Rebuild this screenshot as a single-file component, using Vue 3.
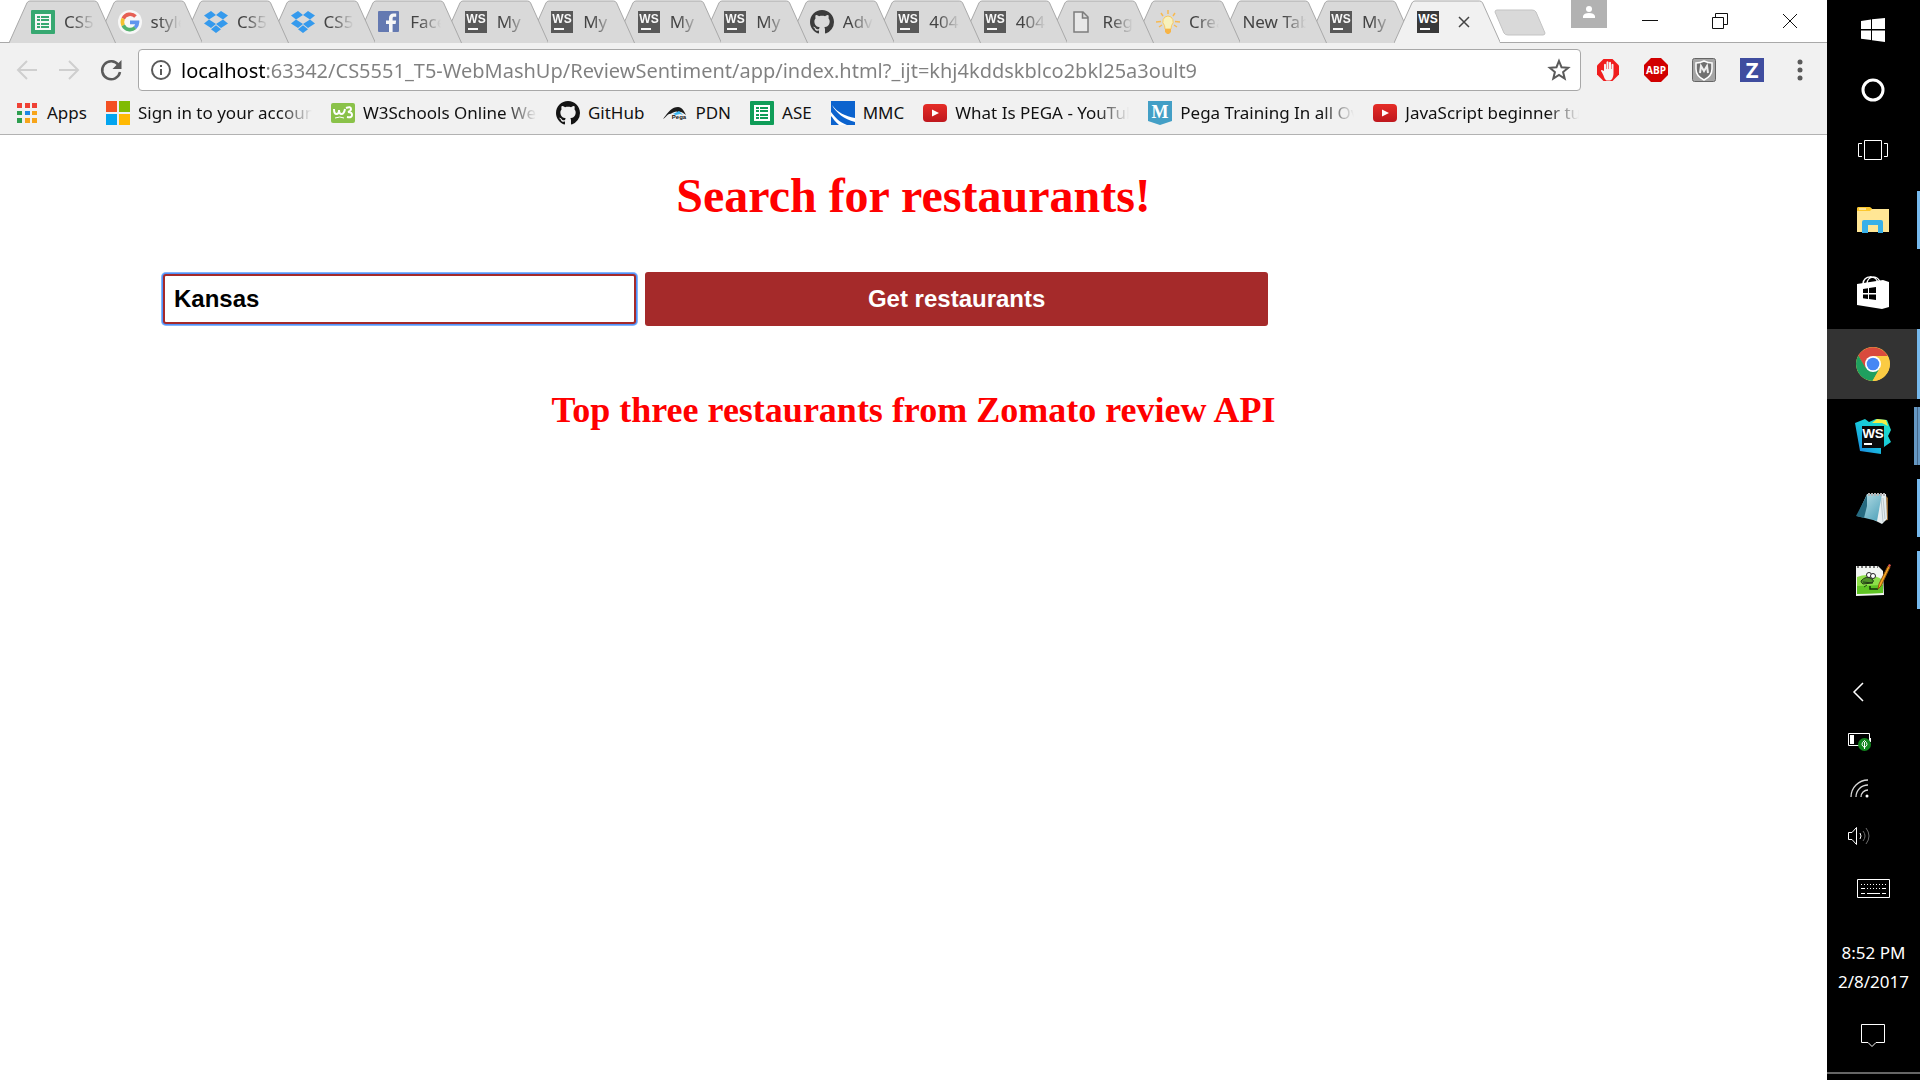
<script setup>
import { h, ref } from 'vue'

// Lettering that sits on top of some icons, in the icon's 24-unit grid.
const lettering = {
  ws: { text: 'WS', x: 12, y: 13, size: 12, family: 'Liberation Sans, sans-serif', fill: '#fff' },
  webstorm: { text: 'WS', x: 12, y: 13, size: 9, family: 'Liberation Sans, sans-serif', fill: '#fff' },
  pega: { text: 'Pega', x: 16, y: 18, size: 6, family: 'Liberation Sans, sans-serif', fill: '#111' },
  mshield: { text: 'M', x: 12, y: 17, size: 18, family: 'Liberation Serif, serif', fill: '#fff' },
  abp: { text: 'ABP', x: 12, y: 16, size: 10, family: 'Open Sans, sans-serif', fill: '#fff' },
  zotero: { text: 'Z', x: 12, y: 20, size: 22, family: 'Open Sans, sans-serif', fill: '#fff' }
}

function Icon(props) {
  const mark = lettering[props.name]
  return h('svg', { viewBox: '0 0 24 24', 'aria-hidden': 'true' }, [
    h('use', { href: '#' + props.name, width: 24, height: 24 }),
    mark
      ? h('text', {
          x: mark.x,
          y: mark.y,
          fill: mark.fill,
          'text-anchor': 'middle',
          'font-family': mark.family,
          'font-size': mark.size,
          'font-weight': 'bold'
        }, mark.text)
      : null
  ])
}
Icon.props = ['name']

const tabs = [
  { icon: 'sheets', label: 'CS5551' },
  { icon: 'google', label: 'style guide' },
  { icon: 'dropbox', label: 'CS5551' },
  { icon: 'dropbox', label: 'CS5551' },
  { icon: 'facebook', label: 'Facebook' },
  { icon: 'ws', label: 'My' },
  { icon: 'ws', label: 'My' },
  { icon: 'ws', label: 'My' },
  { icon: 'ws', label: 'My' },
  { icon: 'github', label: 'Advanced' },
  { icon: 'ws', label: '404 Not' },
  { icon: 'ws', label: '404 Not' },
  { icon: 'page', label: 'Registry' },
  { icon: 'bulb', label: 'Create' },
  { icon: '', label: 'New Tab' },
  { icon: 'ws', label: 'My' },
  { icon: 'ws', label: '', active: true }
]

const bookmarks = [
  { icon: 'apps', label: 'Apps' },
  { icon: 'microsoft', label: 'Sign in to your account', long: true },
  { icon: 'w3', label: 'W3Schools Online Web', long: true },
  { icon: 'github', label: 'GitHub' },
  { icon: 'pega', label: 'PDN' },
  { icon: 'sheets', label: 'ASE' },
  { icon: 'mmc', label: 'MMC' },
  { icon: 'youtube', label: 'What Is PEGA - YouTube', long: true },
  { icon: 'mshield', label: 'Pega Training In all Over', long: true },
  { icon: 'youtube', label: 'JavaScript beginner tutorial', long: true }
]

const extensions = [
  { icon: 'hand', label: 'AdBlock' },
  { icon: 'abp', label: 'Adblock Plus' },
  { icon: 'mcafee', label: 'McAfee' },
  { icon: 'zotero', label: 'Z' },
  { icon: 'dots', label: 'Menu' }
]

const system = [
  { icon: 'windows', label: 'Start' },
  { icon: 'cortana', label: 'Cortana' },
  { icon: 'taskview', label: 'Task View' }
]

const programs = [
  { icon: 'folder', label: 'File Explorer', state: 'running' },
  { icon: 'store', label: 'Store', state: '' },
  { icon: 'chrome', label: 'Chrome', state: 'running current' },
  { icon: 'webstorm', label: 'WebStorm', state: 'running stacked' },
  { icon: 'notepad', label: 'Notepad', state: 'running' },
  { icon: 'npp', label: 'Notepad++', state: 'running' }
]

const tray = [
  { icon: 'chevron', label: 'Hidden icons' },
  { icon: 'battery', label: 'Battery' },
  { icon: 'wifi', label: 'Network' },
  { icon: 'sound', label: 'Volume' }
]

const url = ref('localhost:63342/CS5551_T5-WebMashUp/ReviewSentiment/app/index.html?_ijt=khj4kddskblco2bkl25a3oult9')
const place = ref('Kansas')
</script>

<template>
  <svg class="sprite" width="0" height="0" aria-hidden="true">
    <defs>
      <linearGradient id="g-ws" x1="0" y1="1" x2="1" y2="0">
        <stop offset="0" stop-color="#1c7fe0" /><stop offset=".5" stop-color="#18c9dd" /><stop offset="1" stop-color="#1fe0c0" />
      </linearGradient>
      <linearGradient id="g-note" x1="0" y1="0" x2="1" y2="1">
        <stop offset="0" stop-color="#c2e4ea" /><stop offset="1" stop-color="#4a9fb8" />
      </linearGradient>
      <linearGradient id="g-yt" x1="0" y1="0" x2="0" y2="1">
        <stop offset="0" stop-color="#e52d27" /><stop offset="1" stop-color="#bf171d" />
      </linearGradient>
    </defs>
    <symbol id="sheets" viewBox="0 0 24 24">
      <rect width="24" height="24" rx="1" fill="#0f9d58" />
      <path d="M4 4h16v16H4z" fill="#fff" />
      <path d="M6 6h3v2H6zM10 6h8v2h-8zM6 9h3v2H6zM10 9h8v2h-8zM6 13h3v2H6zM10 13h8v2h-8zM6 16h3v2H6zM10 16h8v2h-8z" fill="#0f9d58" />
    </symbol>
    <symbol id="google" viewBox="0 0 24 24">
      <circle cx="12" cy="12" r="12" fill="#fff" />
      <g fill="none" stroke-width="3.6">
        <path d="M17.5 6.6A7.6 7.6 0 0 0 5.2 8.6" stroke="#ea4335" />
        <path d="M5.2 8.6a7.6 7.6 0 0 0 0 6.8" stroke="#fbbc05" />
        <path d="M5.2 15.4a7.6 7.6 0 0 0 11.9 2.3" stroke="#34a853" />
        <path d="M17.1 17.7A7.6 7.6 0 0 0 19.5 12.4H12" stroke="#4285f4" />
      </g>
    </symbol>
    <symbol id="dropbox" viewBox="0 0 24 24">
      <path d="M7 1l5 4-7 4.500L0 5.500zM17 1l-5 4 7 4.500 5-4zM0 13.500l5-4 7 4.500-5 4zM24 13.500l-5-4-7 4.500 5 4zM7 19.200l5-4 5 4-5 3.800z" fill="#0d8bf2" />
    </symbol>
    <symbol id="facebook" viewBox="0 0 24 24">
      <rect x="1" y="1" width="21" height="21" rx="1" fill="#4862a8" />
      <path d="M12 22v-8H9v-3.500h3V8c0-3 1.800-4.600 4.500-4.600l2.700.1v3.200h-1.800c-1.500 0-1.800.7-1.800 1.700v2.100h3.500L18.600 14h-3v8z" fill="#fff" />
    </symbol>
    <symbol id="ws" viewBox="0 0 24 24">
      <rect x="1" y="1" width="22" height="22" fill="#393939" />
      <rect x="4" y="18" width="10" height="2" fill="#fff" />
    </symbol>
    <symbol id="github" viewBox="0 0 16 16">
      <path fill="#141414" d="M8 0C3.58 0 0 3.58 0 8c0 3.54 2.29 6.53 5.47 7.59.4.07.55-.17.55-.38 0-.19-.01-.82-.01-1.490-2.010.37-2.530-.49-2.690-.94-.09-.23-.48-.94-.82-1.130-.28-.15-.68-.52-.01-.53.63-.01 1.080.58 1.230.82.72 1.210 1.870.87 2.330.66.07-.52.28-.87.51-1.070-1.780-.2-3.640-.89-3.640-3.950 0-.87.31-1.590.82-2.150-.08-.2-.36-1.020.08-2.120 0 0 .67-.21 2.200.82.64-.18 1.320-.27 2-.27.68 0 1.360.09 2 .27 1.530-1.040 2.200-.82 2.200-.82.44 1.100.16 1.920.08 2.120.51.56.82 1.270.82 2.150 0 3.070-1.870 3.750-3.650 3.950.29.25.54.73.54 1.480 0 1.070-.01 1.930-.01 2.200 0 .21.15.46.55.38A8.013 8.013 0 0 0 16 8c0-4.420-3.580-8-8-8z" />
    </symbol>
    <symbol id="page" viewBox="0 0 24 24">
      <path d="M5 2h9l5 5v15H5zM13.500 2v6H19" fill="#ececec" stroke="#666" stroke-width="1.500" />
    </symbol>
    <symbol id="bulb" viewBox="0 0 24 24">
      <path d="M12 0v4M5 3l2 3M19 3l-2 3M0 12l5-.5M24 12l-5-.5M3 17l3-2M21 17l-3-2" stroke="#ffb22e" stroke-width="1.500" />
      <path d="M12 6a5.500 5.500 0 0 0-3.500 9.500L9 19h6l.5-3.500A5.500 5.500 0 0 0 12 6z" fill="#fff7b5" stroke="#ffc445" />
      <path d="M9 19h6v3l-2 2h-2l-2-2z" fill="#ffac22" />
    </symbol>
    <symbol id="apps" viewBox="0 0 24 24">
      <path d="M2 2h5v5H2zM10 2h5v5h-5zM17 2h5v5h-5z" fill="#ef4135" />
      <path d="M2 10h5v4H2zM2 17h5v5H2z" fill="#2e9f50" />
      <path d="M10 10h5v4h-5z" fill="#1e88e5" />
      <path d="M17 10h5v4h-5zM10 17h5v5h-5zM17 17h5v5h-5z" fill="#f7a51b" />
    </symbol>
    <symbol id="microsoft" viewBox="0 0 24 24">
      <path d="M0 0h11v11H0z" fill="#f35022" /><path d="M13 0h11v11H13z" fill="#80bb03" />
      <path d="M0 13h11v11H0z" fill="#03a5f0" /><path d="M13 13h11v11H13z" fill="#ffb903" />
    </symbol>
    <symbol id="w3" viewBox="0 0 24 24">
      <rect y="2" width="24" height="20" rx="2" fill="#8ac249" />
      <path d="M3 8q0 5 2.500 5T8 9q0 4 2.500 4T14 8M15 7q5-2 5 1 0 2-3 3 4 0 4 3 0 3-5 2" fill="none" stroke="#fff" stroke-width="2" />
      <path d="M4 17q5-2 9 0" fill="none" stroke="#fff" />
    </symbol>
    <symbol id="pega" viewBox="0 0 24 24">
      <path d="M0 18C6 10 9 6 15 6c4 0 6 4 8 8-3-2-5-4-8-3-3-2-6 2-9 2-2 1-4 4-6 5z" fill="#1b1b1b" />
      <path d="M10 13l6-3 4 4-3-1-4 1z" fill="#3bb5f0" />
    </symbol>
    <symbol id="mmc" viewBox="0 0 24 24">
      <path d="M0 0h24v24H0z" fill="#0c63ce" />
      <path d="M1 4c6 8 13 11 23 13v4C13 18 5 12 1 4zM0 11c5 6 8 10 16 13H8C4 21 2 17 0 15z" fill="#fff" />
    </symbol>
    <symbol id="youtube" viewBox="0 0 24 24">
      <rect y="3" width="24" height="18" rx="4" fill="url(#g-yt)" />
      <path d="M9 8.500v7l7-3.500z" fill="#fff" />
    </symbol>
    <symbol id="mshield" viewBox="0 0 24 24">
      <path d="M0 0h24v20l-12 4-12-4z" fill="#439fc6" />
    </symbol>
    <symbol id="back" viewBox="0 0 24 24">
      <path d="M22 12H3M12 3l-9 9 9 9" fill="none" stroke="#cfcfcf" stroke-width="2" />
    </symbol>
    <symbol id="forward" viewBox="0 0 24 24">
      <path d="M2 12h19M12 3l9 9-9 9" fill="none" stroke="#cfcfcf" stroke-width="2" />
    </symbol>
    <symbol id="reload" viewBox="0 0 24 24">
      <path d="M19.500 7A9 9 0 1 0 21 14" fill="none" stroke="#5a5a5a" stroke-width="2.500" />
      <path d="M22.500 2v9h-9z" fill="#5a5a5a" />
    </symbol>
    <symbol id="info" viewBox="0 0 24 24">
      <circle cx="12" cy="12" r="9" fill="none" stroke="#5a5a5a" stroke-width="2" />
      <path d="M11 11h2v6h-2zM11 7h2v2h-2z" fill="#5a5a5a" />
    </symbol>
    <symbol id="star" viewBox="0 0 24 24">
      <path d="M12 3l2.500 6.200 6.700.5-5.100 4.300 1.600 6.500L12 17l-5.700 3.500L7.900 14 2.800 9.700l6.700-.5z" fill="none" stroke="#5a5a5a" stroke-width="2" />
    </symbol>
    <symbol id="hand" viewBox="0 0 24 24">
      <path d="M7.500 1h9L23 7.500v9L16.500 23h-9L1 16.500v-9z" fill="#f01d1d" />
      <path d="M6 12l2 1V6.500q1-1.500 2 0V11h.5V4q1-1.500 2 0v7h.5V4.500q1-1.500 2 0V11h.5V6.500q1-1.500 2 0V15c0 5-2 7.500-4 7.500h-3C8 21 8 17 5 13q0-1.500 1-1z" fill="#f4f4f4" />
    </symbol>
    <symbol id="abp" viewBox="0 0 24 24">
      <path d="M7 0h10l7 7v10l-7 7H7l-7-7V7z" fill="#d10000" />
    </symbol>
    <symbol id="mcafee" viewBox="0 0 24 24">
      <rect x=".5" y=".5" width="23" height="23" rx="2" fill="#a5a5a5" stroke="#666" />
      <path d="M4 5q4 0 8-2 4 2 8 2v6q0 7-8 11-8-4-8-11z" fill="#707070" stroke="#fff" stroke-width="1.500" />
      <path d="M8 15l1-7 3 5 3-5 1 7" fill="none" stroke="#eee" stroke-width="2" />
    </symbol>
    <symbol id="zotero" viewBox="0 0 24 24">
      <path d="M0 0h24v24H0z" fill="#3f4d9f" />
    </symbol>
    <symbol id="dots" viewBox="0 0 24 24">
      <g fill="#5a5a5a"><circle cx="12" cy="4" r="2.500" /><circle cx="12" cy="12" r="2.500" /><circle cx="12" cy="20" r="2.500" /></g>
    </symbol>
    <symbol id="windows" viewBox="0 0 36 36">
      <path d="M6 9l10-1.500V17H6zM17 7.300L30 6v11H17zM6 18.500h10V28L6 26.700zM17 18.500h13V30l-13-1.800z" fill="#fff" />
    </symbol>
    <symbol id="cortana" viewBox="0 0 36 36">
      <circle cx="18" cy="18" r="10" fill="none" stroke="#fff" stroke-width="3" />
    </symbol>
    <symbol id="taskview" viewBox="0 0 36 36">
      <path d="M9.500 8.500h17v19h-17zM7 11.500H3.500v13H7M29 11.500h3.500v13H29" fill="none" stroke="#fff" />
    </symbol>
    <symbol id="folder" viewBox="0 0 36 36">
      <path d="M2 7q0-2 2-2h10l3 2h17v23H2z" fill="#ffe695" />
      <path d="M2 9V7q0-2 2-2h10q2 0 3 2l-2 2z" fill="#fcc72c" />
      <path d="M4 7h7" stroke="#fff" />
      <path d="M7 31V20q0-2 2-2h17q2 0 2 2v11h-5v-8H13v8z" fill="#38b0e8" />
    </symbol>
    <symbol id="store" viewBox="0 0 36 36">
      <path d="M8 10c0-9 14-10 15 0M12 10c0-9 12-9 13-1" fill="none" stroke="#fff" stroke-width="1.500" />
      <path d="M2 10l26-4 6 2v25l-7 2-25-4z" fill="#fff" />
      <path d="M8 15l5-.7V19H8zM14 14l7-1v6h-7zM8 20.500h5V25l-5-.8zM14 20.500h7V26l-7-1z" fill="#000" />
    </symbol>
    <symbol id="chrome" viewBox="0 0 36 36">
      <circle cx="18" cy="18" r="17" fill="#fbcb43" />
      <path d="M18 18l-7.800 4.500L3.300 9.500A17 17 0 0 1 32.700 10H18z" fill="#d94a3d" />
      <path d="M18 18l6.900 4-7.400 13A17 17 0 0 1 3.300 9.500l7 12z" fill="#1fa05f" />
      <path d="M18 10h14.700A17 17 0 0 1 17.500 35L25 22z" fill="#fbcb43" />
      <circle cx="18" cy="18" r="8" fill="#fff" /><circle cx="18" cy="18" r="6.300" fill="#4687f4" />
    </symbol>
    <symbol id="webstorm" viewBox="0 0 36 36">
      <path d="M0 5l10-4 4 3 7-3 11 1 4 10-3 6 3 6-7 5h-3v7l-21-3z" fill="url(#g-ws)" />
      <path d="M17 5l5-4 9 1 2 6-6-3z" fill="#f5ee45" />
      <path d="M7 8h22v22H7z" fill="#0a0a0a" />
      <path d="M9 25h8v2H9z" fill="#fff" />
    </symbol>
    <symbol id="notepad" viewBox="0 0 36 36">
      <path d="M30 5l3 3v22l-6 1z" fill="#94682f" />
      <path d="M14 4h17l1 25-5 5-8-4z" fill="#e6eef0" />
      <path d="M26 8l2 24M28 8l2 21" stroke="#b9c6ca" />
      <path d="M12 4h15l-5 27-20-5z" fill="url(#g-note)" />
      <path d="M12 5L1 26l8 2 3-12z" fill="#266a80" />
      <path d="M13 4.500h18" stroke="#b5b5b5" stroke-width="3" stroke-dasharray="2 1" />
    </symbol>
    <symbol id="npp" viewBox="0 0 36 36">
      <path d="M1 4h22l5 5 1 24-28 1z" fill="#f2f5f2" />
      <path d="M2 15q13-5 26 3v13L2 32z" fill="#8ee04a" />
      <path d="M2 24l26-1v8L2 32z" fill="#5fc424" />
      <path d="M2 5h21" stroke="#777" stroke-width="2" stroke-dasharray="2 2" />
      <path d="M6 19q5-6 11-2 3 2 0 4l-9 1q-2-1-2-3zM9 25l3-2M8 20l10 1" fill="#4f9128" stroke="#233c16" />
      <g fill="#fff" stroke="#222"><circle cx="14" cy="13" r="2.500" /><circle cx="18" cy="14" r="2.500" /></g>
      <path d="M15 24v3h8" fill="none" stroke="#153009" stroke-width="1.500" />
      <path d="M23 27l1-5L33 4l2 1-9 19z" fill="#f7a722" stroke="#915411" />
      <path d="M33 4l1-2 2 1-1 2z" fill="#e8564c" />
    </symbol>
    <symbol id="chevron" viewBox="0 0 24 24">
      <path d="M16 3l-9 9 9 9" fill="none" stroke="#fff" stroke-width="1.500" />
    </symbol>
    <symbol id="battery" viewBox="0 0 24 24">
      <path d="M1.500 5.500h21v12h-21zM23.500 10v4" fill="none" stroke="#fff" />
      <path d="M3 7h4v9H3z" fill="#fff" />
      <circle cx="17.500" cy="16.500" r="6.500" fill="#11851d" />
      <path d="M17.500 12.500q-5 4 0 7 5-3 0-7zM17.500 14v7" fill="none" stroke="#fff" />
    </symbol>
    <symbol id="wifi" viewBox="0 0 24 24">
      <g fill="none" stroke="#d8d8d8" stroke-width="1.300">
        <path d="M4 21A17 17 0 0 1 21 4M9 21A12 12 0 0 1 21 9M14 21a7 7 0 0 1 7-7" />
      </g>
      <circle cx="20" cy="20" r="1.500" fill="#fff" />
    </symbol>
    <symbol id="sound" viewBox="0 0 24 24">
      <path d="M1.500 8.500H5l4.500-5v17l-4.500-5H1.500z" fill="none" stroke="#fff" />
      <path d="M13 9q2 3 0 6" fill="none" stroke="#fff" />
      <path d="M16 7q4 5 0 10M19 4q6 8 0 16" fill="none" stroke="#6c6c6c" />
    </symbol>
    <symbol id="keyboard" viewBox="0 0 36 24">
      <path d="M2.500 2.500h32v18h-32z" fill="none" stroke="#fff" />
      <path d="M6 7.500h25" stroke="#fff" stroke-dasharray="1 2" />
      <path d="M6 11.500h4M27 11.500h4M6 16.500h4M12 16.500h13M27 16.500h4" stroke="#fff" />
      <path d="M12 11.500h13" stroke="#fff" stroke-dasharray="1 2" />
    </symbol>
    <symbol id="notice" viewBox="0 0 24 24">
      <path d="M.5.5h23v18H15l-4 4-4-4H.5z" fill="none" stroke="#fff" />
    </symbol>
    <symbol id="cross" viewBox="0 0 16 16">
      <path d="M1 1l14 14M15 1L1 15" fill="none" stroke="#111" />
    </symbol>
    <symbol id="tabcross" viewBox="0 0 12 12">
      <path d="M1 1l10 10M11 1L1 11" fill="none" stroke="#444" stroke-width="1.500" />
    </symbol>
    <symbol id="restore" viewBox="0 0 16 16">
      <path d="M.5 4.500h11v11H.5zM3.500 4V.5h12v11H12" fill="none" stroke="#111" />
    </symbol>
    <symbol id="minimize" viewBox="0 0 16 16">
      <path d="M0 7.500h16" stroke="#111" />
    </symbol>
  </svg>

  <div class="screen">
    <div class="browser">
      <header class="titlebar">
        <div class="tabs" role="tablist">
          <button
            v-for="(tab, i) in tabs"
            :key="i"
            class="tab"
            :class="{ active: tab.active }"
            :style="{ zIndex: tab.active ? tabs.length + 1 : tabs.length - i }"
            role="tab"
            :aria-selected="!!tab.active"
          >
            <svg class="tab-shape" viewBox="0 0 107 43" preserveAspectRatio="none" aria-hidden="true">
              <path class="fill" d="M0 43L18 3Q19 1 21 1H86Q88 1 89 3L107 43" />
            </svg>
            <Icon v-if="tab.icon" class="icon" :name="tab.icon" />
            <span v-if="tab.label" class="tab-label">{{ tab.label }}</span>
            <svg v-if="tab.active" class="tab-close"><use href="#tabcross" /></svg>
          </button>
        </div>
        <button class="new-tab" aria-label="New tab">
          <svg width="52" height="28" viewBox="0 0 52 28">
            <path d="M3 1H38Q41 1 42 3L51 24Q51 26 49 26H14Q11 26 10 24L1 3Q1 1 3 1z" fill="#d9d9d9" stroke="#c3c3c3" />
          </svg>
        </button>
        <button class="person" aria-label="Profile">
          <svg width="36" height="28" viewBox="0 0 36 28">
            <circle cx="18" cy="9" r="3" fill="#fff" />
            <path d="M12 18v-2q1-3 6-3t6 3v2z" fill="#fff" />
          </svg>
        </button>
        <div class="window-controls">
          <button aria-label="Minimize"><svg><use href="#minimize" /></svg></button>
          <button aria-label="Restore"><svg><use href="#restore" /></svg></button>
          <button aria-label="Close"><svg><use href="#cross" /></svg></button>
        </div>
      </header>

      <div class="toolbar">
        <nav class="history">
          <button aria-label="Back"><Icon class="icon" name="back" /></button>
          <button aria-label="Forward"><Icon class="icon" name="forward" /></button>
          <button aria-label="Reload"><Icon class="icon" name="reload" /></button>
        </nav>
        <div class="omnibox">
          <Icon class="icon" name="info" />
          <input v-model="url" class="url" type="text" aria-label="Address" spellcheck="false" />
          <button aria-label="Bookmark this page"><Icon class="icon" name="star" /></button>
        </div>
        <div class="extensions">
          <button v-for="ext in extensions" :key="ext.icon" :aria-label="ext.label">
            <Icon class="icon" :name="ext.icon" />
          </button>
        </div>
      </div>

      <nav class="bookmarks">
        <a v-for="(mark, i) in bookmarks" :key="i" href="#" class="bookmark">
          <Icon class="icon" :name="mark.icon" />
          <span :class="{ long: mark.long }">{{ mark.label }}</span>
        </a>
      </nav>

      <main class="page">
        <h1>Search for restaurants!</h1>
        <form class="search" @submit.prevent>
          <input v-model="place" type="text" aria-label="Place" />
          <button type="submit">Get restaurants</button>
        </form>
        <h2>Top three restaurants from Zomato review API</h2>
      </main>
    </div>

    <aside class="taskbar">
      <button v-for="item in system" :key="item.icon" class="system" :aria-label="item.label">
        <Icon class="task-icon" :name="item.icon" />
      </button>
      <div class="programs">
        <button v-for="item in programs" :key="item.icon" class="program" :class="item.state" :aria-label="item.label">
          <Icon class="task-icon" :name="item.icon" />
        </button>
      </div>
      <div class="tray">
        <button v-for="item in tray" :key="item.icon" class="tray-item" :aria-label="item.label">
          <Icon class="icon" :name="item.icon" />
        </button>
        <button class="keyboard" aria-label="Touch keyboard">
          <svg width="36" height="24"><use href="#keyboard" /></svg>
        </button>
        <div class="clock">
          <span>8:52 PM</span>
          <span>2/8/2017</span>
        </div>
        <button class="notice" aria-label="Notifications">
          <Icon class="icon" name="notice" />
        </button>
        <div class="desktop-edge"></div>
      </div>
    </aside>
  </div>
</template>

<style>
body {
  margin: 0;
  background: #fff;
}
</style>

<style scoped>
* {
  box-sizing: border-box;
}

button {
  display: flex;
  align-items: center;
  justify-content: center;
  margin: 0;
  padding: 0;
  border: 0;
  background: none;
  font: inherit;
  color: inherit;
}

svg,
.icon,
.task-icon {
  display: block;
  flex: none;
}

.sprite {
  position: absolute;
}

.icon {
  width: 24px;
  height: 24px;
}

.screen {
  display: flex;
  min-height: 100vh;
  font-family: "Noto Sans", "Open Sans", sans-serif;
}

.browser {
  display: flex;
  flex: 1;
  flex-direction: column;
  min-width: 0;
}

/* Tab strip */
.titlebar {
  display: flex;
  height: 43px;
  background: linear-gradient(#fff 42px, #a9a9a9 42px);
}

.tabs {
  display: flex;
  flex: 1;
  min-width: 0;
  padding-left: 9px;
}

.tab {
  position: relative;
  flex: 1 1 0;
  justify-content: flex-start;
  gap: 9px;
  min-width: 0;
  height: 43px;
  margin-right: -20px;
  padding: 0 21px 0 22px;
  font-size: 17px;
  color: #444;
}

.tab-shape {
  position: absolute;
  inset: 0;
  width: 100%;
  height: 43px;
}

.fill {
  fill: #d9d9d9;
  stroke: #a9a9a9;
}

.tab .icon {
  position: relative;
  opacity: 0.8;
}

.tab-label {
  position: relative;
  flex: 1;
  overflow: hidden;
  text-align: left;
  white-space: nowrap;
  -webkit-mask-image: linear-gradient(to left, transparent, #000 22px);
  mask-image: linear-gradient(to left, transparent, #000 22px);
}

.tab.active .fill {
  fill: #f1f1f1;
}

.tab.active .icon {
  opacity: 1;
}

.tab-close {
  position: relative;
  width: 12px;
  height: 12px;
  margin-left: 9px;
}

.new-tab {
  align-items: flex-start;
  width: 52px;
  height: 42px;
  margin: 0 25px 0 14px;
  padding-top: 9px;
}

.person {
  width: 36px;
  height: 28px;
  background: #b2b2b2;
}

.window-controls {
  display: flex;
  width: 220px;
  height: 41px;
  padding-left: 8px;
}

.window-controls button {
  width: 70px;
}

.window-controls svg {
  width: 16px;
  height: 16px;
}

/* Address row */
.toolbar {
  display: flex;
  align-items: center;
  height: 54px;
  background: #f1f1f1;
}

.history {
  display: flex;
  gap: 18px;
  width: 138px;
  padding-left: 15px;
}

.omnibox {
  display: flex;
  flex: 1;
  align-items: center;
  gap: 8px;
  height: 42px;
  min-width: 0;
  padding: 0 9px 0 10px;
  border: 1px solid #a8a8a8;
  border-radius: 4px;
  background: #fff;
}

.url {
  flex: 1;
  min-width: 0;
  padding: 0;
  border: 0;
  outline: 0;
  background: linear-gradient(to right, #000 84px, #808080 84px);
  -webkit-background-clip: text;
  background-clip: text;
  color: transparent;
  font: 20px "Noto Sans", sans-serif;
}

.extensions {
  display: flex;
  gap: 24px;
  width: 246px;
  padding-left: 15px;
}

/* Bookmarks */
.bookmarks {
  display: flex;
  gap: 19px;
  height: 38px;
  padding: 0 15px 6px;
  border-bottom: 1px solid #b2b2b2;
  background: #f1f1f1;
}

.bookmark {
  display: flex;
  align-items: center;
  gap: 8px;
  color: #111;
  font-size: 17px;
  text-decoration: none;
  white-space: nowrap;
}

.long {
  width: 174px;
  overflow: hidden;
  -webkit-mask-image: linear-gradient(to left, transparent, #000 32px);
  mask-image: linear-gradient(to left, transparent, #000 32px);
}

/* Web page */
.page {
  flex: 1;
  color: red;
  font-family: "Liberation Serif", serif;
  text-align: center;
}

h1 {
  margin: 33px 0 49px;
  font-size: 48px;
  line-height: 55px;
}

h2 {
  margin: 64px 0 30px;
  font-size: 36px;
  line-height: 41px;
}

.search {
  display: grid;
  grid-template-columns: 38fr 50fr;
  gap: 9px;
  height: 54px;
  padding: 0 559px 0 163px;
  font: bold 24px "Liberation Sans", sans-serif;
}

.search input {
  min-width: 0;
  margin: 2px 0;
  padding: 0 9px;
  border: 2px solid brown;
  border-radius: 3px;
  outline: 0;
  box-shadow: 0 0 0 1px #4f93fb, 0 0 0 2px #86b5fb;
  color: #000;
  font: inherit;
}

.search button {
  border-radius: 3px;
  background: brown;
  color: #fff;
}

/* Taskbar */
.taskbar {
  display: flex;
  flex: none;
  flex-direction: column;
  width: 93px;
  background: #000;
  color: #fff;
}

.task-icon {
  width: 36px;
  height: 36px;
}

.system,
.program {
  padding-right: 1px;
}

.system {
  height: 60px;
}

.programs {
  display: flex;
  flex-direction: column;
  gap: 2px;
  padding-top: 5px;
}

.program {
  position: relative;
  height: 70px;
}

.current {
  background: #333;
}

.running::after {
  position: absolute;
  top: 6px;
  right: 0;
  bottom: 6px;
  width: 3px;
  background: #76b9ed;
  content: "";
}

.current::after {
  top: 0;
  bottom: 0;
}

.stacked::after {
  width: 6px;
  background: linear-gradient(to right, #6597c2 3px, #44678a 3px 4px, #6597c2 4px);
}

.tray {
  margin-top: auto;
}

.tray-item {
  width: 64px;
  height: 48px;
}

.tray button:not(.tray-item) {
  width: 92px;
}

.keyboard {
  height: 58px;
}

.clock {
  display: flex;
  flex-direction: column;
  padding-top: 20px;
  font-size: 17px;
  line-height: 29px;
  text-align: center;
}

.notice {
  height: 76px;
  padding-top: 4px;
}

.desktop-edge {
  height: 8px;
  border-top: 2px solid #666;
}
</style>
